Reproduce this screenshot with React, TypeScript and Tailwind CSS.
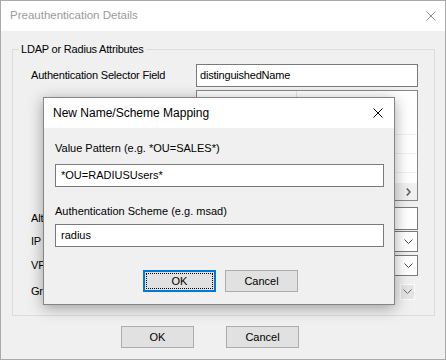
import React from "react";

const XIcon = ({ color }: { color: string }) => (
  <svg width="10" height="10" viewBox="0 0 10 10" className="block">
    <path d="M0.5 0.5 L9.5 9.5 M9.5 0.5 L0.5 9.5" fill="none" stroke={color} strokeWidth="1" />
  </svg>
);

const Chevron = ({ color = "#4a4a4a" }: { color?: string }) => (
  <svg width="9" height="5" viewBox="0 0 9 5" className="block">
    <path d="M0.5 0.5 L4.5 4.5 L8.5 0.5" fill="none" stroke={color} strokeWidth="1" />
  </svg>
);

const RightArrow = () => (
  <svg width="5" height="8" viewBox="0 0 5 8" className="block">
    <path d="M0.8 0.5 L4 4 L0.8 7.5" fill="none" stroke="#606060" strokeWidth="1.6" />
  </svg>
);

const Row = ({ label, children, className = "" }: { label: string; children: React.ReactNode; className?: string }) => (
  <div className={`flex items-center ${className}`}>
    <span className="flex-1 whitespace-nowrap overflow-hidden">{label}</span>
    {children}
  </div>
);

const Combo = () => (
  <div className="w-[222px] h-[21px] border border-[#7a7a7a] bg-white flex items-center justify-end pr-[4px]">
    <Chevron />
  </div>
);

export default function App() {
  return (
    <div className="relative w-[446px] h-[360px] overflow-hidden bg-[#f0f0f0] font-['Liberation_Sans',Arial,sans-serif] text-black">
      <div className="flex flex-col w-[446px] h-[360px] border border-[#aaaaaa]">
        <div className="h-[30px] shrink-0 bg-white flex items-center justify-between pl-[9px] pr-[9px]">
          <span className="text-[11.5px] text-[#9a9a9a]">Preauthentication Details</span>
          <XIcon color="#8a8a8a" />
        </div>

        <fieldset className="ml-[11px] mt-[11px] w-[423px] h-[274px] shrink-0 border border-[#dcdcdc] text-[11px] tracking-[-0.2px]">
          <legend className="ml-[6px] px-[2px] leading-[14px] text-[11px]">LDAP or Radius Attributes</legend>
          <div className="flex flex-col pt-[8px] pl-[18px] pr-[16px]">
            <Row label="Authentication Selector Field">
              <div className="w-[222px] h-[23px] border border-[#7a7a7a] bg-white flex items-center pl-[3px]">
                distinguishedName
              </div>
            </Row>
            <div className="mt-[3px] self-end w-[222px] h-[111px] border border-[#828790] bg-white flex flex-col">
              <div className="h-[25px] shrink-0 flex">
                <div className="w-[100px] border-r border-[#e5e5e5]" />
              </div>
              <div className="h-[19px] shrink-0 border-b border-[#f0f0f0]" />
              <div className="h-[19px] shrink-0 border-b border-[#f0f0f0]" />
              <div className="h-[19px] shrink-0 border-b border-[#f0f0f0]" />
              <div className="flex-1" />
              <div className="h-[17px] shrink-0 bg-[#f0f0f0] flex justify-end">
                <div className="w-[17px] flex items-center justify-center">
                  <RightArrow />
                </div>
              </div>
            </div>
            <Row label="Alt" className="mt-[6px]">
              <div className="w-[222px] h-[23px] border border-[#7a7a7a] bg-white" />
            </Row>
            <Row label="IP" className="mt-[1px]">
              <Combo />
            </Row>
            <Row label="VPN" className="mt-[3px]">
              <Combo />
            </Row>
            <Row label="Group" className="mt-[5px]">
              <div className="w-[222px] h-[21px] border border-[#f0f0f0] bg-[#f0f0f0] flex items-center justify-end pr-[2px]">
                <div className="w-[15px] h-[16px] bg-[#e5e5e5] border border-[#fcfcfc] flex items-center justify-center">
                  <Chevron color="#6d6d6d" />
                </div>
              </div>
            </Row>
          </div>
        </fieldset>

        <div className="flex mt-[10px] pl-[120px] gap-[32px] text-[11px]">
          <button className="w-[73px] h-[22px] border border-[#adadad] bg-[#e1e1e1]">OK</button>
          <button className="w-[73px] h-[22px] border border-[#adadad] bg-[#e1e1e1]">Cancel</button>
        </div>
      </div>

      <div className="absolute left-[43px] top-[97px] w-[352px] h-[208px] border border-[#858585] bg-[#f0f0f0] shadow-[0_3px_14px_rgba(0,0,0,0.35)] flex flex-col text-[11px]">
        <div className="h-[30px] shrink-0 bg-white flex items-center justify-between pl-[9px] pr-[11px]">
          <span className="text-[12px]">New Name/Scheme Mapping</span>
          <XIcon color="#000" />
        </div>
        <div className="flex flex-col pl-[11px] pr-[10px]">
          <div className="mt-[12px] leading-[16px]">Value Pattern (e.g. *OU=SALES*)</div>
          <div className="mt-[8px] h-[23px] border border-[#7a7a7a] bg-white flex items-center pl-[5px]">*OU=RADIUSUsers*</div>
          <div className="mt-[16px] leading-[16px]">Authentication Scheme (e.g. msad)</div>
          <div className="mt-[5px] h-[23px] border border-[#7a7a7a] bg-white flex items-center pl-[5px]">radius</div>
          <div className="mt-[23px] flex pl-[88px] gap-[9px]">
            <button className="w-[73px] h-[22px] border-2 border-[#0078d7] bg-[#e1e1e1] p-[1px]">
              <div className="w-full h-full border border-dotted border-black flex items-center justify-center">OK</div>
            </button>
            <button className="w-[73px] h-[22px] border border-[#adadad] bg-[#e1e1e1]">Cancel</button>
          </div>
        </div>
      </div>
    </div>
  );
}
